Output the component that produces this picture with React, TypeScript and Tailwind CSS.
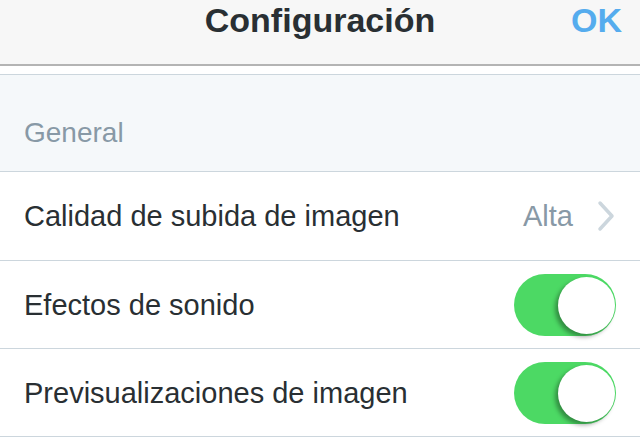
import React, { useState } from 'react';

const FONT = { fontFamily: '"Liberation Sans", Arial, sans-serif' };

type ToggleProps = { on: boolean; onChange: () => void };

const Toggle: React.FC<ToggleProps> = ({ on, onChange }) => (
  <button
    onClick={onChange}
    className={`relative w-[102px] h-[62px] rounded-full shrink-0 ${on ? 'bg-[#4cd964]' : 'bg-[#e5e5e5]'}`}
  >
    <span
      className={`absolute top-[3px] w-[57px] h-[57px] rounded-full bg-white shadow-[-3px_3px_4px_rgba(0,0,0,0.35)] ${on ? 'right-[1px]' : 'left-[1px]'}`}
    />
  </button>
);

export default function App() {
  const [sound, setSound] = useState(true);
  const [previews, setPreviews] = useState(true);

  return (
    <div className="w-[640px] h-[446px] bg-white overflow-hidden" style={FONT}>
      {/* Nav bar */}
      <div className="h-[66px] bg-[#f7f7f7] border-b-2 border-[#b4b4b4] relative flex justify-center pt-[1px]">
        <span className="text-[34px] font-bold text-[#292f33] leading-[38px]">Configuración</span>
        <button className="absolute right-[18px] top-[1px] text-[34px] font-bold text-[#55acee] leading-[38px]">OK</button>
      </div>

      <div className="h-[9px] bg-white border-b border-[#ccd6dd]" />

      {/* Section header */}
      <div className="h-[97px] bg-[#f5f8fa] border-b border-[#ccd6dd] flex items-center px-[24px] pt-[20px]">
        <span className="text-[28px] text-[#8899a6]">General</span>
      </div>

      {/* Rows */}
      <div className="h-[89px] border-b border-[#ccd6dd] flex items-center justify-between pl-[24px] pr-[24px] pt-[2px]">
        <span className="text-[29px] text-[#292f33]">Calidad de subida de imagen</span>
        <div className="flex items-center gap-[24px]">
          <span className="text-[29px] text-[#8899a6]">Alta</span>
          <svg width="19" height="32" viewBox="0 0 19 32" fill="none" className="-mt-[2px]">
            <path d="M3 3 L15 16 L3 29" stroke="#ccd6dd" strokeWidth="3.5" strokeLinecap="round" strokeLinejoin="round" />
          </svg>
        </div>
      </div>

      <div className="h-[88px] border-b border-[#ccd6dd] flex items-center justify-between pl-[24px] pr-[24px]">
        <span className="text-[29px] text-[#292f33] pt-[2px]">Efectos de sonido</span>
        <Toggle on={sound} onChange={() => setSound(v => !v)} />
      </div>

      <div className="h-[88px] border-b border-[#ccd6dd] flex items-center justify-between pl-[24px] pr-[24px]">
        <span className="text-[29px] text-[#292f33] pt-[2px]">Previsualizaciones de imagen</span>
        <Toggle on={previews} onChange={() => setPreviews(v => !v)} />
      </div>
    </div>
  );
}
